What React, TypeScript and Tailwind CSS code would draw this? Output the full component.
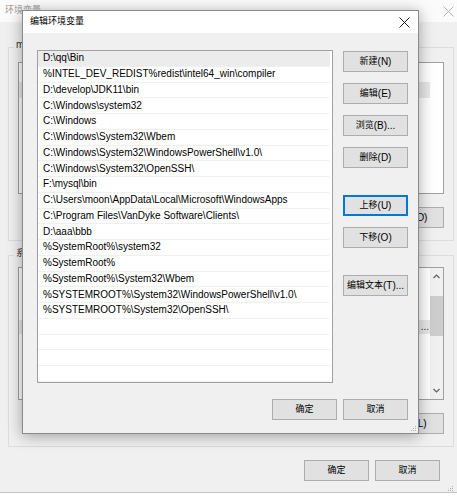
const paths = [
  "D:\\qq\\Bin",
  "%INTEL_DEV_REDIST%redist\\intel64_win\\compiler",
  "D:\\develop\\JDK11\\bin",
  "C:\\Windows\\system32",
  "C:\\Windows",
  "C:\\Windows\\System32\\Wbem",
  "C:\\Windows\\System32\\WindowsPowerShell\\v1.0\\",
  "C:\\Windows\\System32\\OpenSSH\\",
  "F:\\mysql\\bin",
  "C:\\Users\\moon\\AppData\\Local\\Microsoft\\WindowsApps",
  "C:\\Program Files\\VanDyke Software\\Clients\\",
  "D:\\aaa\\bbb",
  "%SystemRoot%\\system32",
  "%SystemRoot%",
  "%SystemRoot%\\System32\\Wbem",
  "%SYSTEMROOT%\\System32\\WindowsPowerShell\\v1.0\\",
  "%SYSTEMROOT%\\System32\\OpenSSH\\",
];

const rows = [...paths, "", "", "", ""];

// CJK glyphs are set a touch smaller than the Latin ones, as in the capture
function T({ text }: { text: string }) {
  const parts = text.split(/([\u4e00-\u9fff]+)/).filter(Boolean);
  return (
    <>
      {parts.map((p, i) =>
        /[\u4e00-\u9fff]/.test(p) ? (
          <span key={i} className="text-[9px]">
            {p}
          </span>
        ) : (
          <span key={i}>{p}</span>
        )
      )}
    </>
  );
}

function Btn({ label, focused = false }: { label: string; focused?: boolean }) {
  return (
    <div
      className={`flex h-[21px] w-[65px] shrink-0 items-center justify-center border bg-[#e1e1e1] text-[10px] leading-none text-black ${
        focused ? "border-[#0078d7] shadow-[inset_0_0_0_1px_#0078d7]" : "border-[#adadad]"
      }`}
    >
      <T text={label} />
    </div>
  );
}

function CloseIcon({ color }: { color: string }) {
  return (
    <svg width="11" height="11" viewBox="0 0 11 11">
      <path d="M0.5 0.5 L10.5 10.5 M10.5 0.5 L0.5 10.5" stroke={color} strokeWidth="1" fill="none" />
    </svg>
  );
}

function Chevron({ up }: { up?: boolean }) {
  return (
    <svg width="7" height="5" viewBox="0 0 7 5">
      <path
        d={up ? "M0.5 4 L3.5 1 L6.5 4" : "M0.5 1 L3.5 4 L6.5 1"}
        stroke="#606060"
        strokeWidth="1.2"
        fill="none"
      />
    </svg>
  );
}

function Grip() {
  return (
    <svg width="6" height="6" viewBox="0 0 6 6">
      <rect x="4" y="0" width="1" height="1" fill="#b0b0b0" />
      <rect x="2" y="2" width="1" height="1" fill="#b0b0b0" />
      <rect x="4" y="2" width="1" height="1" fill="#b0b0b0" />
      <rect x="0" y="4" width="1" height="1" fill="#b0b0b0" />
      <rect x="2" y="4" width="1" height="1" fill="#b0b0b0" />
      <rect x="4" y="4" width="1" height="1" fill="#b0b0b0" />
    </svg>
  );
}

function BackgroundWindow() {
  return (
    <div className="flex h-[493px] flex-col border-b border-[#c4c4c4] bg-[#f0f0f0]">
      <div className="flex h-[22px] items-center justify-between bg-[#fbfbfb] pl-[5px] pr-[3px]">
        <span className="text-[9px] text-[#999999]">环境变量</span>
        <CloseIcon color="#b5b5b5" />
      </div>

      <div className="flex flex-col pl-[8px] pr-[3px] pt-[25px]">
        <div className="relative flex h-[194px] flex-col border border-[#dcdcdc] px-[9px] pt-[14px]">
          <span className="absolute left-[5px] top-[-8px] bg-[#f0f0f0] px-[2px] text-[10px] leading-none text-[#333]">
            <T text="moon 的用户变量" />
          </span>
          <div className="flex h-[132px] flex-col border border-[#a0a0a0] bg-white pt-[19px]">
            <div className="h-[16px] w-[411px] bg-[#e8e8e8]" />
          </div>
          <div className="mt-[13px] flex justify-end gap-[7px]">
            <Btn label="新建(N)..." />
            <Btn label="编辑(E)..." />
            <Btn label="删除(D)" />
          </div>
        </div>

        <div className="relative mt-[14px] flex h-[192px] flex-col border border-[#dcdcdc] px-[9px] pt-[11px]">
          <span className="absolute left-[5px] top-[-8px] bg-[#f0f0f0] px-[2px] text-[10px] leading-none text-[#333]">
            <T text="系统变量" />
          </span>
          <div className="flex h-[133px] border border-[#a0a0a0] bg-white">
            <div className="flex flex-1 flex-col pt-[52px]">
              <div className="flex h-[14px] items-center justify-end bg-[#e8e8e8] pr-[1px] text-[10px] leading-none text-[#333]">
                ...
              </div>
            </div>
            <div className="flex w-[13px] flex-col items-center bg-[#f0f0f0]">
              <div className="mt-[6px]">
                <Chevron up />
              </div>
              <div className="mt-[17px] h-[40px] w-[13px] bg-[#cdcdcd]" />
              <div className="flex-1" />
              <div className="mb-[6px]">
                <Chevron />
              </div>
            </div>
          </div>
          <div className="mt-[13px] flex justify-end gap-[7px]">
            <Btn label="新建(W)..." />
            <Btn label="编辑(I)..." />
            <Btn label="删除(L)" />
          </div>
        </div>

        <div className="mt-[13px] flex justify-end gap-[6px] pr-[14px]">
          <Btn label="确定" />
          <Btn label="取消" />
        </div>
        <div className="mt-[5px] flex justify-end">
          <Grip />
        </div>
      </div>
    </div>
  );
}

function EditDialog() {
  return (
    <div className="absolute left-[22px] top-[10px] flex h-[424px] w-[397px] flex-col border border-[#8a8a8a] bg-[#f0f0f0] shadow-[0_2px_14px_rgba(0,0,0,0.35)]">
      <div className="flex h-[22px] items-center justify-between bg-white pl-[7px] pr-[8px]">
        <span className="text-[9px] text-black">编辑环境变量</span>
        <CloseIcon color="#1a1a1a" />
      </div>

      <div className="flex pl-[14px] pr-[10px] pt-[17px]">
        <div className="h-[333px] w-[296px] overflow-hidden border border-[#a0a0a0] bg-white pr-[2px]">
          {rows.map((p, i) => (
            <div
              key={i}
              className={`flex h-[15.75px] items-center border-b border-[#f0f0f0] pl-[5px] text-[10px] leading-none text-black ${
                i === 0 ? "bg-[#ececec]" : ""
              }`}
            >
              <span className="whitespace-nowrap">{p}</span>
            </div>
          ))}
        </div>

        <div className="ml-[10px] flex flex-col pt-[1px]">
          <div className="flex flex-col gap-[11px]">
            <Btn label="新建(N)" />
            <Btn label="编辑(E)" />
            <Btn label="浏览(B)..." />
            <Btn label="删除(D)" />
          </div>
          <div className="mt-[27px] flex flex-col gap-[11px]">
            <Btn label="上移(U)" focused />
            <Btn label="下移(O)" />
          </div>
          <div className="mt-[27px]">
            <Btn label="编辑文本(T)..." />
          </div>
        </div>
      </div>

      <div className="mt-[16px] flex justify-end gap-[6px] pr-[10px]">
        <Btn label="确定" />
        <Btn label="取消" />
      </div>
      <div className="mt-auto flex justify-end pb-[1px] pr-[1px]">
        <Grip />
      </div>
    </div>
  );
}

export default function App() {
  return (
    <div
      className="relative h-[496px] w-[457px] overflow-hidden bg-white"
      style={{ fontFamily: '"Liberation Sans", "Noto Sans CJK SC", sans-serif' }}
    >
      <BackgroundWindow />
      <EditDialog />
    </div>
  );
}
